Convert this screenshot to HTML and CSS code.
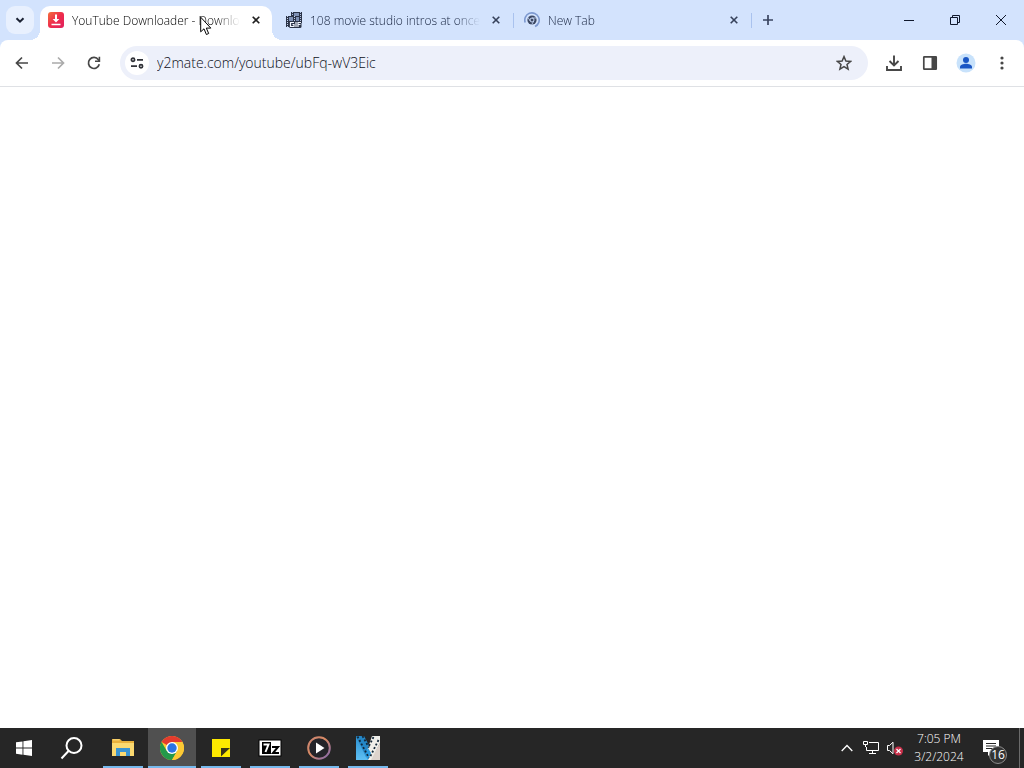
FILE: index.html
```
<!DOCTYPE html>
<html lang="en">
<head>
    <meta charset="UTF-8">
    <meta name="viewport" content="width=device-width, initial-scale=1.0">
    <title>YouTube Downloader</title>
    <link rel="stylesheet" href="styles.css">
</head>
<body>
    <header class="browser">
        <div class="tab-strip">
            <button class="tab-search" aria-label="Search tabs">
                <svg width="10" height="10" viewBox="0 0 10 10"><path d="M1.5 3.2 5 6.7 8.5 3.2" fill="none" stroke="#1b2233" stroke-width="2"/></svg>
            </button>
            <div class="tabs">
                <div class="tab active">
                    <svg class="favicon" width="16" height="16" viewBox="0 0 16 16">
                        <defs>
                            <linearGradient id="y2" x1="0" y1="0" x2="1" y2="1">
                                <stop offset="0" stop-color="#f4703c"/>
                                <stop offset="0.5" stop-color="#ee2c4c"/>
                                <stop offset="1" stop-color="#e0205f"/>
                            </linearGradient>
                        </defs>
                        <rect width="16" height="16" rx="3" fill="url(#y2)"/>
                        <path d="M7 2.5h2V7h2.4L8 10.6 4.6 7H7z" fill="#fff"/>
                        <path d="M3.500 12.500h9" stroke="#fff" stroke-width="1.500"/>
                    </svg>
                    <span class="title">YouTube Downloader - Downlo</span>
                    <button class="close" aria-label="Close tab"><svg width="8" height="8" viewBox="0 0 8 8"><path d="M.7.7l6.600 6.600M7.300.7.7 7.300"/></svg></button>
                </div>
                <div class="tab">
                    <svg class="favicon" width="16" height="16" viewBox="0 0 16 16">
                        <path d="M5 0h11v11H5z" fill="#2b3448"/>
                        <path d="M8 1h5v3H8zM8 5h5v4H8z" fill="#7f91b5"/>
                        <path d="M6.500 0v10M14.500 0v10" stroke="#b4c4e4" stroke-dasharray="1 1"/>
                        <path d="M0 4h10v11H0z" fill="#2b3448"/>
                        <path d="M3 5h4v4H3z" fill="#7f91b5"/>
                        <path d="M1.500 4v11M8.500 4v6" stroke="#c6d4ef" stroke-dasharray="1 1"/>
                        <rect x="3" y="9" width="12.500" height="7" rx="1.500" fill="#2b3448"/>
                        <path d="M8 10.500H4.500v4H8V12.500H6.500M10 10v5M12 15v-4.500h3M12 12.500h2.500" fill="none" stroke="#f2f6ff" stroke-width="1.200"/>
                    </svg>
                    <span class="title">108 movie studio intros at once</span>
                    <button class="close" aria-label="Close tab"><svg width="8" height="8" viewBox="0 0 8 8"><path d="M.7.7l6.600 6.600M7.300.7.7 7.300"/></svg></button>
                </div>
                <div class="tab">
                    <svg class="favicon" width="16" height="16" viewBox="0 0 16 16">
                        <path d="M1.200 10.500A7.200 7.200 0 1 1 11 14.600" fill="none" stroke="#7d99d0" stroke-width="1.600"/>
                        <circle cx="8" cy="8" r="4.600" fill="#3c4863"/>
                        <circle cx="8" cy="8" r="2" fill="#3c4863" stroke="#c9d9f8"/>
                        <path d="M8 6h4.300M6.200 9 4 5.500M9.800 9 7.800 12.500" stroke="#c9d9f8" stroke-width=".8"/>
                    </svg>
                    <span class="title">New Tab</span>
                    <button class="close" aria-label="Close tab"><svg width="8" height="8" viewBox="0 0 8 8"><path d="M.7.7l6.600 6.600M7.300.7.7 7.300"/></svg></button>
                </div>
            </div>
            <button class="new-tab" aria-label="New tab">
                <svg width="12" height="12" viewBox="0 0 12 12"><path d="M6 1v10M1 6h10" stroke="#3a4560" stroke-width="1.700"/></svg>
            </button>
            <div class="window-controls">
                <button aria-label="Minimize"><svg width="10" height="10" viewBox="0 0 10 10"><path d="M0 5.500h10"/></svg></button>
                <button aria-label="Restore"><svg width="10" height="10" viewBox="0 0 10 10"><path d="M.5 2.500h7v7h-7zM2.500 2.500v-2h7v7h-2"/></svg></button>
                <button aria-label="Close"><svg width="10" height="10" viewBox="0 0 10 10"><path d="M0 0l10 10M10 0 0 10"/></svg></button>
            </div>
        </div>

        <div class="toolbar">
            <button class="tool" aria-label="Back">
                <svg width="16" height="16" viewBox="0 0 16 16"><path d="M14 8H3M8 2.500 2.500 8 8 13.500" fill="none" stroke="#474747" stroke-width="1.700"/></svg>
            </button>
            <button class="tool" aria-label="Forward" disabled>
                <svg width="16" height="16" viewBox="0 0 16 16"><path d="M2 8h11M8 2.500 13.500 8 8 13.500" fill="none" stroke="#ababab" stroke-width="1.700"/></svg>
            </button>
            <button class="tool" aria-label="Reload">
                <svg width="16" height="16" viewBox="0 0 16 16"><path d="M13.300 9.300A5.500 5.500 0 1 1 12.400 4.700L13.500 6" fill="none" stroke="#474747" stroke-width="1.700"/><path d="M14.200 1.800v5.200H9V5.400h3.600V1.800z" fill="#474747"/></svg>
            </button>
            <div class="omnibox">
                <button class="site-info" aria-label="View site information">
                    <svg width="14" height="14" viewBox="0 0 14 14" fill="none" stroke="#303238" stroke-width="1.700"><circle cx="3" cy="3.800" r="1.600"/><circle cx="11" cy="10.200" r="1.600"/><path d="M7 3.800h6M1 10.200h6"/></svg>
                </button>
                <input class="url" type="text" aria-label="Address and search bar" value="y2mate.com/youtube/ubFq-wV3Eic">
                <button class="star" aria-label="Bookmark this tab">
                    <svg width="16" height="16" viewBox="0 0 16 16"><path d="M8 1.600 9.900 6l4.700.4-3.600 3.100 1.100 4.700L8 11.700l-4.100 2.500L5 9.500 1.400 6.400 6.100 6z" fill="none" stroke="#474747" stroke-width="1.500"/></svg>
                </button>
            </div>
            <button class="tool" aria-label="Downloads">
                <svg width="18" height="18" viewBox="0 0 18 18" fill="none" stroke="#474747" stroke-width="1.900"><path d="M9 1.500v9.500M4.500 7 9 11.500 13.500 7M2 12v4h14v-4"/></svg>
            </button>
            <button class="tool" aria-label="Side panel">
                <svg width="16" height="16" viewBox="0 0 16 16"><rect x="1.800" y="1.800" width="12.400" height="12.400" rx=".5" fill="#fff" stroke="#474747" stroke-width="1.700"/><path d="M9.500 1.500H14.500v13h-5z" fill="#474747"/></svg>
            </button>
            <button class="tool" aria-label="Profile">
                <svg width="20" height="20" viewBox="0 0 20 20"><circle cx="10" cy="10" r="9.500" fill="#c8e2fb"/><circle cx="10" cy="7" r="3" fill="#1a56c4"/><path d="M4 15.500v-1.500c0-2 3.500-3.200 6-3.200s6 1.200 6 3.200v1.500z" fill="#1a56c4"/></svg>
            </button>
            <button class="tool" aria-label="Menu">
                <svg width="16" height="16" viewBox="0 0 16 16" fill="#474747"><circle cx="8" cy="3" r="1.600"/><circle cx="8" cy="8" r="1.600"/><circle cx="8" cy="13" r="1.600"/></svg>
            </button>
        </div>
    </header>

    <main class="page"></main>

    <footer class="taskbar">
        <button class="start" aria-label="Start">
            <svg width="16" height="16" viewBox="0 0 16 16" fill="#fff"><path d="M0 2.300 6.500 1.400v6.200H0zM7.400 1.300 16 0v7.600H7.400zM0 8.500h6.500v6.200L0 13.800zM7.400 8.500H16V16l-8.600-1.200z"/></svg>
        </button>
        <button class="start" aria-label="Search">
            <svg width="24" height="24" viewBox="0 0 24 24" fill="none" stroke="#fff" stroke-width="2"><circle cx="14" cy="9.500" r="7.500"/><path d="M8.500 15 1.500 22.500"/></svg>
        </button>
        <div class="apps">
            <button class="app" aria-label="File Explorer">
                <svg width="24" height="24" viewBox="0 0 24 24"><path d="M1 3h8l2 2h12v15H1z" fill="#e9b13c"/><path d="M2 3h6.500v1.500H2z" fill="#f6cf6b"/><path d="M1 7h22v13H1z" fill="#fbd970"/><path d="M5 12h14v8h-4v-4H9v4H5z" fill="#3b94d1"/></svg>
            </button>
            <button class="app current" aria-label="Google Chrome">
                <svg width="24" height="24" viewBox="0 0 24 24"><circle cx="12" cy="12" r="12" fill="#fcc934"/><path d="M12 12 1.600 6A12 12 0 0 1 22.400 6H12z" fill="#e33b2e"/><path d="M1.600 6A12 12 0 0 0 12 24l5.200-9L12 12 6.800 15z" fill="#23994a"/><path d="M12 6h10.400A12 12 0 0 1 12 24l5.200-9z" fill="#fcc934"/><circle cx="12" cy="12" r="6" fill="#fff"/><circle cx="12" cy="12" r="4.700" fill="#2b74e4"/></svg>
            </button>
            <button class="app" aria-label="Sticky Notes">
                <svg width="24" height="24" viewBox="0 0 24 24"><path d="M3 3h18v18H3z" fill="#fee900"/><path d="M12 12h9l-9 8.500z" fill="#3a3518"/></svg>
            </button>
            <button class="app" aria-label="7-Zip">
                <svg width="24" height="24" viewBox="0 0 24 24"><rect x=".5" y="3.500" width="23" height="17" fill="#000"/><rect x="1.500" y="4.500" width="21" height="15" fill="#fff"/><path d="M4 6h9v12H4z" fill="#000"/><path d="M5.500 8.500h5L7.500 16" fill="none" stroke="#fff" stroke-width="2"/><path d="M14 11h6l-5 6h6" fill="none" stroke="#000" stroke-width="2"/></svg>
            </button>
            <button class="app" aria-label="Media Player">
                <svg width="24" height="24" viewBox="0 0 24 24"><defs><linearGradient id="ring" x1="0" y1="0" x2="1" y2="1"><stop offset="0" stop-color="#c98472"/><stop offset=".45" stop-color="#d98a63"/><stop offset="1" stop-color="#7d67b4"/></linearGradient></defs><circle cx="12" cy="12" r="10.800" fill="#242429" stroke="url(#ring)" stroke-width="2"/><path d="M9 6.500 17.500 12 9 17.500z" fill="#fff"/></svg>
            </button>
            <button class="app" aria-label="Vegas">
                <svg width="24" height="24" viewBox="0 0 24 24">
                    <defs><linearGradient id="film" x1="0" y1="0" x2="0" y2="1"><stop offset="0" stop-color="#2a8fd0"/><stop offset="1" stop-color="#5fc0f4"/></linearGradient></defs>
                    <path d="M0 0l13 24H0z" fill="url(#film)"/>
                    <path d="M0 0h8l7 13-5 8z" fill="#2587c6"/>
                    <path d="M24 7v17H14z" fill="#ddd3cc"/>
                    <path d="M16 0h8v7l-9 17h-3l-1-9z" fill="#f0efea"/>
                    <path d="M12 12l3 5-3 7-3-5z" fill="#2b9adf"/>
                    <path d="M1.500.5 13 22M6.500 0 13 11.500" stroke="#14283a" stroke-width="1.800" stroke-dasharray="2 2"/>
                    <path d="M17.500 1 12.500 11M22.500 4l-8.500 17" stroke="#14283a" stroke-width="1.800" stroke-dasharray="2 2"/>
                </svg>
            </button>
        </div>
        <div class="tray">
            <button class="tray-up" aria-label="Show hidden icons"><svg width="12" height="8" viewBox="0 0 12 8"><path d="M.7 7 6 1.500 11.300 7" fill="none" stroke="#fff" stroke-width="1.300"/></svg></button>
            <button aria-label="Network"><svg width="16" height="16" viewBox="0 0 16 16" fill="none" stroke="#fff"><path d="M6 2.500h9.500v8H3.500V7M9.500 10.500v3M6 13.500h7M.5 1.500h4v3h-4zM2.500 4.500v2.500"/></svg></button>
            <button aria-label="Volume muted"><svg width="16" height="16" viewBox="0 0 16 16"><path d="M.5 5.500h2L6 2.200v11.600L2.500 10.500h-2z" fill="none" stroke="#fff"/><circle cx="11.500" cy="11" r="4.500" fill="#c8304a"/><path d="M9.500 9l4 4M13.500 9l-4 4" stroke="#fff" stroke-width="1.200"/></svg></button>
        </div>
        <div class="clock">
            <span>7:05 PM</span>
            <span>3/2/2024</span>
        </div>
        <button class="notifications" aria-label="Notifications">
            <svg width="16" height="16" viewBox="0 0 16 16"><path d="M0 0h16v12H9l-4 4v-4H0z" fill="#fff"/><path d="M3 3.500h10M3 6h10M3 8.500h10" stroke="#262626"/></svg>
            <span class="badge">16</span>
        </button>
        <button class="show-desktop" aria-label="Show desktop"></button>
    </footer>

    <!-- mouse pointer, floats over the active tab -->
    <svg class="pointer" width="12" height="20" viewBox="0 0 12 20"><path d="M.7 1.200v14.600l3.300-3 2.400 5.700 2.300-1-2.400-5.400h4.500z" fill="#fff" stroke="#000"/></svg>
</body>
</html>
```

FILE: styles.css
```
* {
    box-sizing: border-box;
}
body {
    margin: 0;
    min-height: 100vh;
    display: flex;
    flex-direction: column;
    font-family: "Open Sans", "Noto Sans", sans-serif;
    font-size: 12px;
    font-weight: 300;
    background-color: #fff;
}
button {
    display: flex;
    align-items: center;
    justify-content: center;
    flex: none;
    padding: 0;
    border: none;
    background: none;
    color: inherit;
    font: inherit;
}
svg {
    display: block;
    flex: none;
}

/* Tab strip */
.browser {
    background-color: #d3e3fd;
    border-bottom: 1px solid #dfe1e5;
}
.tab-strip {
    display: flex;
    align-items: center;
    height: 40px;
    padding-left: 6px;
}
.tab-search {
    width: 28px;
    height: 28px;
    border-radius: 9px;
    background-color: #e8f0fe;
}
.tabs {
    display: flex;
    align-self: flex-end;
    flex: 0 1 714px;
    margin-left: 6px;
    min-width: 0;
}
.tab {
    display: flex;
    align-items: center;
    flex: 1;
    min-width: 0;
    height: 34px;
    padding: 0 16px 6px 8px;
    background: linear-gradient(#a9c2ee, #a9c2ee) right 2px top 7px / 1px 15px no-repeat;
    color: #16233f;
}
.tab.active {
    position: relative;
    flex: 0 0 232px;
    margin-right: 6px;
    padding-right: 12px;
    border-radius: 10px 10px 0 0;
    background: #fff;
    color: #000;
}
/* curved feet of the active tab */
.tab.active::before,
.tab.active::after {
    content: "";
    position: absolute;
    bottom: 0;
    width: 10px;
    height: 10px;
}
.tab.active::before {
    right: 100%;
    background: radial-gradient(circle at 0 0, transparent 10px, #fff 10px);
}
.tab.active::after {
    left: 100%;
    background: radial-gradient(circle at 100% 0, transparent 10px, #fff 10px);
}
.title {
    flex: 1;
    min-width: 0;
    margin: 2px 12px 0 8px;
    overflow: hidden;
    white-space: nowrap;
    line-height: 16px;
    -webkit-mask-image: linear-gradient(to left, transparent, #000 24px);
    mask-image: linear-gradient(to left, transparent, #000 24px);
}
.close svg {
    stroke: #36415a;
    stroke-width: 1.6;
}
.active .close svg {
    stroke: #1f1f1f;
}
.new-tab {
    width: 28px;
    height: 28px;
    margin-right: auto;
}
.window-controls {
    display: flex;
}
.window-controls button {
    width: 46px;
    height: 40px;
}
.window-controls svg {
    fill: none;
    stroke: #10182c;
}

/* Toolbar */
.toolbar {
    display: flex;
    align-items: center;
    height: 46px;
    padding: 0 4px;
    border-radius: 8px 8px 0 0;
    background-color: #fff;
}
.tool {
    width: 36px;
    height: 34px;
}
.omnibox {
    display: flex;
    align-items: center;
    flex: 1;
    min-width: 0;
    height: 34px;
    margin: 0 8px;
    padding: 0 16px 0 5px;
    border-radius: 17px;
    background-color: #edf0fa;
}
.site-info {
    width: 24px;
    height: 24px;
    border-radius: 50%;
    background-color: #fff;
}
.url {
    flex: 1;
    min-width: 0;
    margin: 0 8px;
    padding: 0;
    border: none;
    outline: none;
    background: none;
    font-family: inherit;
    font-size: 14px;
    font-weight: 300;
    line-height: 20px;
    color: #0c0f18;
}

.page {
    flex: 1;
}

/* Taskbar */
.taskbar {
    display: flex;
    height: 40px;
    background-color: #262626;
    color: #fff;
}
.start {
    width: 48px;
}
.apps {
    display: flex;
    gap: 1px;
    margin-left: 3px;
    margin-right: auto;
}
.app {
    width: 48px;
    background: linear-gradient(#76b9ed, #76b9ed) center bottom / 40px 2px no-repeat;
}
.app.current {
    background-color: #505050;
    background-size: 48px 2px;
}
.tray {
    display: flex;
    align-items: center;
    gap: 8px;
}
.tray-up {
    margin-right: 2px;
}
.clock {
    display: flex;
    flex-direction: column;
    justify-content: center;
    align-items: center;
    width: 72px;
    line-height: 18px;
}
.notifications {
    position: relative;
    width: 44px;
    padding-right: 12px;
}
.badge {
    position: absolute;
    right: 12px;
    bottom: 4px;
    width: 18px;
    height: 18px;
    border: 1px solid #8b8b8b;
    border-radius: 50%;
    background-color: #333;
    font-size: 12px;
    font-weight: 400;
    line-height: 16px;
    text-align: center;
}
.show-desktop {
    width: 5px;
    border-left: 1px solid #6b6b6b;
}

.pointer {
    position: absolute;
    left: 200px;
    top: 16px;
}
```
